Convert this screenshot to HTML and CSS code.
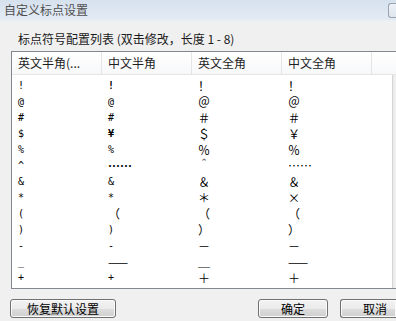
FILE: index.html
```html
<!DOCTYPE html>
<html>
<head>
    <meta http-equiv="Content-Type" content="text/html; charset=utf-8" />
    <title>自定义标点设置</title>
    <link rel="stylesheet" href="styles.css">
</head>

<body>
    <div class="window">
        <header class="titlebar">
            <span class="title">自定义标点设置</span>
            <span class="close-btn"></span>
        </header>
        <main class="content">
            <p class="caption">标点符号配置列表 (双击修改，长度 1 - 8)</p>
            <section class="listview">
                <div class="list-head">
                    <div class="col">英文半角(...</div>
                    <div class="col">中文半角</div>
                    <div class="col">英文全角</div>
                    <div class="col">中文全角</div>
                    <div class="col filler"></div>
                </div>
                <div class="list-body">
                    <ul class="rows">
                        <li><span class="half">!</span><span class="half bold">!</span><span>！</span><span>！</span></li>
                        <li><span class="half">@</span><span class="half">@</span><span>＠</span><span>＠</span></li>
                        <li><span class="half">#</span><span class="half">#</span><span>＃</span><span>＃</span></li>
                        <li><span class="half">$</span><span class="half bold">¥</span><span>＄</span><span>￥</span></li>
                        <li><span class="half">%</span><span class="half">%</span><span>％</span><span>％</span></li>
                        <li><span class="half">^</span><span class="bold">……</span><span>＾</span><span>……</span></li>
                        <li><span class="half">&amp;</span><span class="half">&amp;</span><span>＆</span><span>＆</span></li>
                        <li><span class="half">*</span><span class="half">*</span><span>＊</span><span>×</span></li>
                        <li><span class="half">(</span><span>（</span><span>（</span><span>（</span></li>
                        <li><span class="half">)</span><span class="half">)</span><span>）</span><span>）</span></li>
                        <li><span class="half">-</span><span class="half">-</span><span>－</span><span>－</span></li>
                        <li><span class="half">_</span><span>——</span><span>＿</span><span>——</span></li>
                        <li><span class="half">+</span><span class="half">+</span><span>＋</span><span>＋</span></li>
                    </ul>
                    <div class="scrollbar"></div>
                </div>
            </section>
            <footer class="buttons">
                <button class="btn btn-wide">恢复默认设置</button>
                <div class="btn-group">
                    <button class="btn">确定</button>
                    <button class="btn btn-cut">取消</button>
                </div>
            </footer>
        </main>
    </div>
</body>

</html>
```

FILE: styles.css
```css
body {
    margin: 0;
    padding: 0;
    width: 396px;
    height: 321px;
    overflow: hidden;
    background: #f0f0f0;
    font-family: "Noto Sans CJK SC", sans-serif;
    font-size: 12px;
    color: #000;
}
.window {
    width: 396px;
}
/* 窗口右侧被截图裁掉，所以右边的元素都贴着边缘，不画右边框 */
.titlebar {
    height: 20px;
    display: flex;
    justify-content: space-between;
    align-items: center;
    padding-left: 4px;
    background: linear-gradient(#d6e1ee, #e3ebf5);
    border-bottom: 1px solid #e9eef4;
}
.title {
    color: #4f4f4f;
    line-height: 14px;
}
.close-btn {
    width: 7px;
    height: 13px;
    margin-top: 1px;
    border: 1px solid #9aa4b0;
    border-right: none;
    border-radius: 3px 0 0 3px;
    background: linear-gradient(#eef2f7, #dfe6ee);
}
.content {
    padding: 10px 0 0 11px;
}
.caption {
    margin: 0 0 5px 7px;
    line-height: 15px;
    color: #1a1a1a;
}
.listview {
    height: 236px;
    border: 1px solid #828790;
    border-right: none;
    background: #fff;
    display: flex;
    flex-direction: column;
}
.list-head {
    height: 23px;
    display: grid;
    grid-template-columns: 90px 90px 90px 90px 1fr;
    background: linear-gradient(#fff, #f7f8fa);
    border-bottom: 1px solid #e5e5e5;
    box-sizing: border-box;
}
.col {
    border-right: 1px solid #e5e5e5;
    padding-left: 6px;
    line-height: 22px;
    color: #1e1e1e;
    white-space: nowrap;
}
.col.filler {
    border-right: none;
}
.list-body {
    flex: 1;
    display: flex;
}
ul {
    flex: 1;
    margin: 0;
    padding: 3px 0 0;
    list-style: none;
}
li {
    height: 16px;
    display: grid;
    grid-template-columns: 90px 90px 90px 90px;
    line-height: 16px;
}
li span {
    padding-left: 6px;
    white-space: nowrap;
}
li span.half {
    font-family: "DejaVu Sans Mono", monospace;
    font-size: 10px;
}
li span.bold {
    font-weight: bold;
}
.scrollbar {
    width: 3px;
    border-left: 1px solid #d6d6d6;
    background: linear-gradient(90deg, #e8e8e8, #f4f4f4);
}
.buttons {
    display: flex;
    margin-top: 10px;
}
.btn {
    height: 19px;
    width: 70px;
    padding: 0;
    font-family: "Noto Sans CJK SC", sans-serif;
    font-size: 12px;
    line-height: 16px;
    color: #000;
    border: 1px solid #707070;
    border-radius: 3px;
    background: linear-gradient(#f2f2f2 0%, #ebebeb 50%, #dddddd 51%, #cfcfcf 100%);
    box-shadow: inset 0 0 0 1px #fbfbfb;
}
.btn-wide {
    width: 106px;
    margin-left: -1px;
}
.btn-group {
    margin-left: auto;
    display: flex;
    gap: 12px;
}
.btn-cut {
    width: 56px;
    padding-left: 13px;
    border-right: none;
    border-radius: 3px 0 0 3px;
}
```
